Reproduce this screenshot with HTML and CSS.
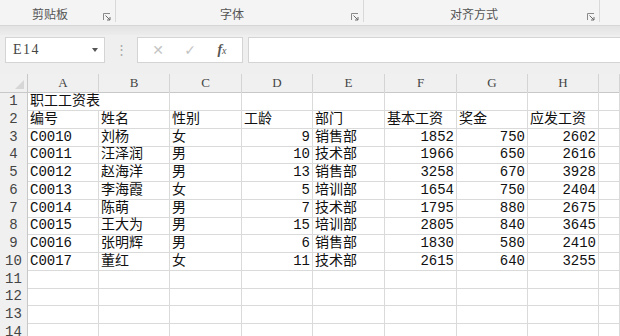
FILE: index.html
```html
<!DOCTYPE html>
<html>
<head>
  <meta charset="UTF-8">
  <title>职工工资表</title>
  <link rel="stylesheet" href="styles.css">
</head>
<body>
  <div class="ribbon">
    <div class="group g-clip">
      <span class="group-label">剪贴板</span>
      <svg class="launcher" width="8" height="8" viewBox="0 0 8 8"><path d="M0.5 7V0.5H7" fill="none" stroke="#8a8a8a"/><path d="M2.5 2.5L7 7M7 4V7H4" fill="none" stroke="#6a6a6a"/></svg>
    </div>
    <div class="group g-font">
      <span class="group-label">字体</span>
      <svg class="launcher" width="8" height="8" viewBox="0 0 8 8"><path d="M0.5 7V0.5H7" fill="none" stroke="#8a8a8a"/><path d="M2.5 2.5L7 7M7 4V7H4" fill="none" stroke="#6a6a6a"/></svg>
    </div>
    <div class="group g-align">
      <span class="group-label">对齐方式</span>
      <svg class="launcher" width="8" height="8" viewBox="0 0 8 8"><path d="M0.5 7V0.5H7" fill="none" stroke="#8a8a8a"/><path d="M2.5 2.5L7 7M7 4V7H4" fill="none" stroke="#6a6a6a"/></svg>
    </div>
    <div class="group g-rest"></div>
  </div>
  <div class="band"></div>

  <div class="formula-bar">
    <div class="name-box">
      <span>E14</span>
      <span class="arrow"></span>
    </div>
    <div class="grip">⋮</div>
    <div class="fx-buttons">
      <span class="fx-btn cancel">✕</span>
      <span class="fx-btn ok">✓</span>
      <span class="fx-btn fx"><i>f</i><small>x</small></span>
    </div>
    <div class="formula-input"></div>
  </div>

  <div class="sheet">
    <div class="row head">
      <div class="corner"><span class="tri"></span></div>
      <div class="ch">A</div><div class="ch">B</div><div class="ch">C</div><div class="ch">D</div>
      <div class="ch">E</div><div class="ch">F</div><div class="ch">G</div><div class="ch">H</div><div class="ch"></div>
    </div>
    <div class="row">
      <div class="rh">1</div>
      <div class="c wide">职工工资表</div><div class="c"></div><div class="c"></div><div class="c"></div>
      <div class="c"></div><div class="c"></div><div class="c"></div><div class="c"></div>
    </div>
    <div class="row">
      <div class="rh">2</div>
      <div class="c">编号</div><div class="c">姓名</div><div class="c">性别</div><div class="c">工龄</div>
      <div class="c">部门</div><div class="c">基本工资</div><div class="c">奖金</div><div class="c">应发工资</div><div class="c"></div>
    </div>
    <div class="row">
      <div class="rh">3</div>
      <div class="c">C0010</div><div class="c">刘杨</div><div class="c">女</div><div class="c n">9</div>
      <div class="c">销售部</div><div class="c n">1852</div><div class="c n">750</div><div class="c n">2602</div><div class="c"></div>
    </div>
    <div class="row">
      <div class="rh">4</div>
      <div class="c">C0011</div><div class="c">汪泽润</div><div class="c">男</div><div class="c n">10</div>
      <div class="c">技术部</div><div class="c n">1966</div><div class="c n">650</div><div class="c n">2616</div><div class="c"></div>
    </div>
    <div class="row">
      <div class="rh">5</div>
      <div class="c">C0012</div><div class="c">赵海洋</div><div class="c">男</div><div class="c n">13</div>
      <div class="c">销售部</div><div class="c n">3258</div><div class="c n">670</div><div class="c n">3928</div><div class="c"></div>
    </div>
    <div class="row">
      <div class="rh">6</div>
      <div class="c">C0013</div><div class="c">李海霞</div><div class="c">女</div><div class="c n">5</div>
      <div class="c">培训部</div><div class="c n">1654</div><div class="c n">750</div><div class="c n">2404</div><div class="c"></div>
    </div>
    <div class="row">
      <div class="rh">7</div>
      <div class="c">C0014</div><div class="c">陈萌</div><div class="c">男</div><div class="c n">7</div>
      <div class="c">技术部</div><div class="c n">1795</div><div class="c n">880</div><div class="c n">2675</div><div class="c"></div>
    </div>
    <div class="row">
      <div class="rh">8</div>
      <div class="c">C0015</div><div class="c">王大为</div><div class="c">男</div><div class="c n">15</div>
      <div class="c">培训部</div><div class="c n">2805</div><div class="c n">840</div><div class="c n">3645</div><div class="c"></div>
    </div>
    <div class="row">
      <div class="rh">9</div>
      <div class="c">C0016</div><div class="c">张明辉</div><div class="c">男</div><div class="c n">6</div>
      <div class="c">销售部</div><div class="c n">1830</div><div class="c n">580</div><div class="c n">2410</div><div class="c"></div>
    </div>
    <div class="row">
      <div class="rh">10</div>
      <div class="c">C0017</div><div class="c">董红</div><div class="c">女</div><div class="c n">11</div>
      <div class="c">技术部</div><div class="c n">2615</div><div class="c n">640</div><div class="c n">3255</div><div class="c"></div>
    </div>
    <div class="row">
      <div class="rh">11</div>
      <div class="c"></div><div class="c"></div><div class="c"></div><div class="c"></div>
      <div class="c"></div><div class="c"></div><div class="c"></div><div class="c"></div><div class="c"></div>
    </div>
    <div class="row">
      <div class="rh">12</div>
      <div class="c"></div><div class="c"></div><div class="c"></div><div class="c"></div>
      <div class="c"></div><div class="c"></div><div class="c"></div><div class="c"></div><div class="c"></div>
    </div>
    <div class="row">
      <div class="rh">13</div>
      <div class="c"></div><div class="c"></div><div class="c"></div><div class="c"></div>
      <div class="c"></div><div class="c"></div><div class="c"></div><div class="c"></div><div class="c"></div>
    </div>
    <div class="row">
      <div class="rh">14</div>
      <div class="c"></div><div class="c"></div><div class="c"></div><div class="c"></div>
      <div class="c"></div><div class="c"></div><div class="c"></div><div class="c"></div><div class="c"></div>
    </div>
  </div>
</body>
</html>
```

FILE: styles.css
```css
body {
  margin: 0;
  width: 620px;
  height: 336px;
  overflow: hidden;
  background: #fff;
  font-family: "Liberation Mono", "Noto Sans CJK SC", monospace;
  color: #222;
}

/* ribbon group labels */
.ribbon {
  display: flex;
  height: 25px;
  background: #f4f4f4;
  border-bottom: 1px solid #d6d6d6;
}

.group {
  position: relative;
  display: flex;
  align-items: flex-end;
  justify-content: center;
  padding-right: 16px;
  padding-bottom: 3px;
  box-sizing: border-box;
}

.group::after {
  content: "";
  position: absolute;
  right: 0;
  top: 0;
  height: 22px;
  border-right: 1px solid #d9d9d9;
}

.g-clip { width: 116px; }
.g-font { width: 248px; }
.g-align { width: 236px; }
.g-rest { flex: 1; }
.g-rest::after { display: none; }

.group-label {
  font-family: "Noto Sans CJK SC", sans-serif;
  font-size: 12px;
  line-height: 16px;
  color: #555;
}

.launcher {
  position: absolute;
  right: 5px;
  bottom: 4px;
}

.band {
  height: 9px;
  background: linear-gradient(#e3e3e3, #ececec);
}

/* formula bar */
.formula-bar {
  display: flex;
  align-items: center;
  height: 39px;
  padding: 2px 0 11px 5px;
  box-sizing: border-box;
  background: #efefef;
}

.formula-bar > div {
  height: 26px;
  box-sizing: border-box;
}

.name-box {
  width: 100px;
  display: flex;
  align-items: center;
  justify-content: space-between;
  padding: 0 6px 0 7px;
  background: #fff;
  border: 1px solid #d4d4d4;
  font-family: "Liberation Serif", serif;
  font-size: 14px;
  letter-spacing: 1.5px;
  color: #444;
}

.arrow {
  width: 0;
  height: 0;
  border-left: 3.5px solid transparent;
  border-right: 3.5px solid transparent;
  border-top: 4px solid #555;
}

.grip {
  width: 32px;
  display: flex;
  align-items: center;
  justify-content: center;
  color: #a8a8a8;
  font-size: 13px;
}

.fx-buttons {
  width: 106px;
  display: flex;
  align-items: center;
  justify-content: space-around;
  padding: 0 4px;
  background: #fff;
  border: 1px solid #d4d4d4;
}

.fx-btn {
  width: 24px;
  text-align: center;
  font-family: "DejaVu Sans", sans-serif;
  font-size: 14px;
  color: #c4c4c4;
}

.fx-btn.fx {
  font-family: "Liberation Serif", serif;
  color: #555;
  font-size: 14px;
}

.fx-btn.fx i {
  font-weight: bold;
}

.fx-btn.fx small {
  font-style: italic;
  font-size: 10px;
}

.formula-input {
  flex: 1;
  margin-left: 5px;
  background: #fff;
  border: 1px solid #d4d4d4;
  border-right: none;
}

/* worksheet */
.sheet {
  background: #fff;
}

.row {
  display: grid;
  grid-template-columns: 28px 71px 71px 72px 71px 72px 72px 71px 71px 1fr;
  height: 17.75px;
}

.row.head {
  height: 18px;
  background: #f0f0f0;
}

.corner {
  position: relative;
  border-right: 1px solid #c8c8c8;
  border-bottom: 1px solid #c8c8c8;
}

.tri {
  position: absolute;
  right: 3px;
  bottom: 3px;
  width: 0;
  height: 0;
  border-left: 9px solid transparent;
  border-bottom: 9px solid #d6d6d6;
}

.ch {
  border-right: 1px solid #d4d4d4;
  border-bottom: 1px solid #c8c8c8;
  text-align: center;
  font-family: "Liberation Serif", serif;
  font-size: 13px;
  line-height: 18px;
  color: #444;
}

.rh {
  background: #f0f0f0;
  border-right: 1px solid #c8c8c8;
  border-bottom: 1px solid #d6d6d6;
  text-align: center;
  font-size: 14px;
  line-height: 18px;
  color: #444;
}

.c {
  border-right: 1px solid #dadada;
  border-bottom: 1px solid #dadada;
  padding: 1px 2px 0;
  overflow: hidden;
  white-space: nowrap;
  font-size: 14px;
  line-height: 17px;
  color: #111;
}

.c.n {
  text-align: right;
}

.c.wide {
  grid-column: span 2;
}
```
